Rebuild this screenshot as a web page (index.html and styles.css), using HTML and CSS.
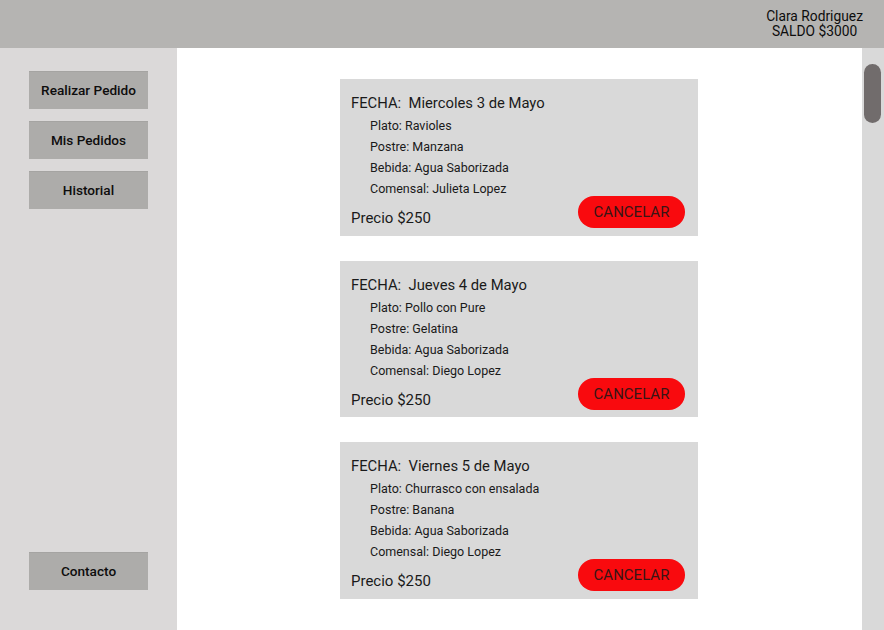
FILE: index.html
```html
<!DOCTYPE html>
<html lang="es">
<head>
<meta charset="utf-8">
<title>Mis Pedidos</title>
<link rel="stylesheet" href="styles.css">
</head>
<body>
<header class="topbar">
  <div class="user">
    <div>Clara Rodriguez</div>
    <div>SALDO $3000</div>
  </div>
</header>
<div class="layout">
  <nav class="sidebar">
    <div class="nav-top">
      <button class="nav-btn">Realizar Pedido</button>
      <button class="nav-btn">Mis Pedidos</button>
      <button class="nav-btn">Historial</button>
    </div>
    <button class="nav-btn">Contacto</button>
  </nav>
  <main class="main">
    <section class="card">
      <div class="fecha">FECHA:&nbsp; Miercoles 3 de Mayo</div>
      <ul class="items">
        <li>Plato: Ravioles</li>
        <li>Postre: Manzana</li>
        <li>Bebida: Agua Saborizada</li>
        <li>Comensal: Julieta Lopez</li>
      </ul>
      <div class="foot">
        <span class="precio">Precio $250</span>
        <button class="cancel">CANCELAR</button>
      </div>
    </section>
    <section class="card">
      <div class="fecha">FECHA:&nbsp; Jueves 4 de Mayo</div>
      <ul class="items">
        <li>Plato: Pollo con Pure</li>
        <li>Postre: Gelatina</li>
        <li>Bebida: Agua Saborizada</li>
        <li>Comensal: Diego Lopez</li>
      </ul>
      <div class="foot">
        <span class="precio">Precio $250</span>
        <button class="cancel">CANCELAR</button>
      </div>
    </section>
    <section class="card">
      <div class="fecha">FECHA:&nbsp; Viernes 5 de Mayo</div>
      <ul class="items">
        <li>Plato: Churrasco con ensalada</li>
        <li>Postre: Banana</li>
        <li>Bebida: Agua Saborizada</li>
        <li>Comensal: Diego Lopez</li>
      </ul>
      <div class="foot">
        <span class="precio">Precio $250</span>
        <button class="cancel">CANCELAR</button>
      </div>
    </section>
  </main>
  <div class="scrolltrack"><div class="thumb"></div></div>
</div>
</body>
</html>
```
FILE: styles.css
```css
* { box-sizing: border-box; }
html, body { margin: 0; height: 100%; overflow: hidden; }
body {
  font-family: Roboto, "Liberation Sans", sans-serif;
  color: #1a1a1a;
  background: #fff;
  display: flex;
  flex-direction: column;
}
.topbar {
  height: 48px;
  flex: none;
  background: #b5b4b2;
  display: flex;
  justify-content: flex-end;
  align-items: flex-start;
  padding: 9px 21px 0 0;
}
.user {
  text-align: center;
  font-size: 13.8px;
  line-height: 15px;
  color: #0d0d0d;
}
.layout {
  flex: 1;
  display: flex;
  min-height: 0;
}
.sidebar {
  width: 177px;
  flex: none;
  background: #dbd9d9;
  display: flex;
  flex-direction: column;
  justify-content: space-between;
  align-items: center;
  padding: 23px 0 40px;
}
.nav-top {
  display: flex;
  flex-direction: column;
  gap: 12px;
}
.nav-btn {
  width: 119px;
  height: 38px;
  margin: 0;
  border: none;
  box-shadow: inset 0 1px 0 #a5a4a2;
  background: #adacaa;
  font-family: inherit;
  font-size: 13.6px;
  font-weight: 500;
  color: #0d0d0d;
  padding: 0 0 1px;
}
.main {
  flex: 1;
  display: flex;
  flex-direction: column;
  align-items: center;
  gap: 25px;
  padding: 31px 1px 0 0;
}
.card {
  width: 358px;
  height: 156.5px;
  background: #d9d9d9;
  padding: 14px 13px 8px 11px;
  display: flex;
  flex-direction: column;
}
.fecha {
  font-size: 14.8px;
  line-height: 20px;
}
.items {
  list-style: none;
  margin: 2px 0 0;
  padding: 0 0 0 19px;
  font-size: 12.5px;
  line-height: 21px;
}
.foot {
  margin-top: -3px;
  display: flex;
  justify-content: space-between;
  align-items: flex-end;
}
.precio {
  font-size: 15px;
  line-height: 20px;
}
.cancel {
  width: 107px;
  height: 32px;
  border: none;
  border-radius: 16px;
  background: #f90a0e;
  color: #3a1515;
  font-family: inherit;
  font-size: 15px;
  padding: 0;
  margin: 0;
}
.scrolltrack {
  width: 22px;
  flex: none;
  background: #d9d9d9;
  padding: 16px 3px 0 2px;
}
.thumb {
  height: 59px;
  border-radius: 9px;
  background: #716c6c;
}
```
